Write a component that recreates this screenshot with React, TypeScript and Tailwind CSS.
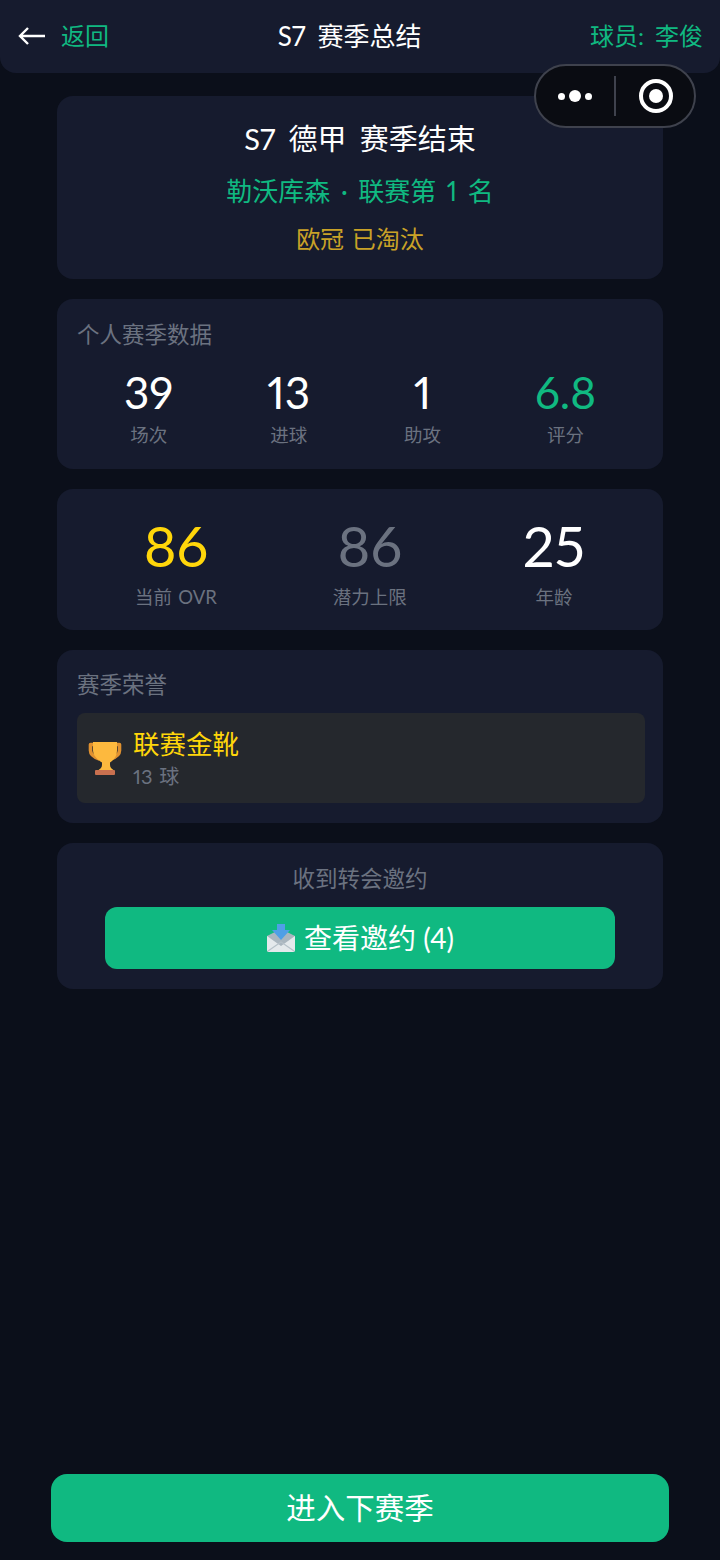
const stats = [
  { value: '39', label: '场次', color: 'text-white' },
  { value: '13', label: '进球', color: 'text-white' },
  { value: '1', label: '助攻', color: 'text-white' },
  { value: '6.8', label: '评分', color: 'text-[#10b981]' },
];

const overview = [
  { value: '86', label: '当前 OVR', color: 'text-[#ffd60a]' },
  { value: '86', label: '潜力上限', color: 'text-[#6b7280]' },
  { value: '25', label: '年龄', color: 'text-white' },
];

function TrophyIcon() {
  return (
    <svg width="36" height="36" viewBox="0 0 36 36" fill="none">
      <path d="M8 4.500H3.500v6c0 4 3 6.500 9 8.500M28 4.500h4.500v6c0 4-3 6.500-9 8.500" stroke="#e0912f" strokeWidth="3.600" strokeLinejoin="round" />
      <path d="M6 2h24v8c0 6-3 10-7 12.500V25c0 2.500 2 4 4 5.500H11c2-1.500 4-3 4-5.500v-2.500C11 20 6 16 6 10V2z" fill="#fdb93e" />
      <rect x="8" y="30" width="20" height="5" rx="1" fill="#c9704f" />
    </svg>
  );
}

function InboxIcon() {
  return (
    <svg width="30" height="30" viewBox="0 0 30 30" fill="none">
      <path d="M1 13L15 6l14 7v14a2 2 0 0 1-2 2H3a2 2 0 0 1-2-2V13z" fill="#aab6bf" />
      <path d="M1 13l14 10 14-10v14a2 2 0 0 1-2 2H3a2 2 0 0 1-2-2V13z" fill="#e4e9ec" />
      <path d="M2 28l13-9 13 9" stroke="#b6c1c9" strokeWidth="1.200" />
      <path d="M11 1h8v6h5l-9 10-9-10h5V1z" fill="#4f9fe6" />
    </svg>
  );
}

function Card({ className, children }: { className: string; children: React.ReactNode }) {
  return <div className={`rounded-[16px] bg-[#161b2e] ${className}`}>{children}</div>;
}

export default function App() {
  return (
    <div
      className="relative flex h-[1560px] w-[720px] flex-col overflow-hidden bg-[#0b0f1a] text-white proportional-nums [word-spacing:0.1em]"
      style={{ fontFamily: 'Lato, "Noto Sans CJK SC", sans-serif' }}
    >
      {/* top bar */}
      <div className="flex h-[73px] items-center justify-between rounded-b-[16px] bg-[#161b2e] pb-[2px] pl-[18px] pr-[17px]">
        <div className="flex items-center gap-[15px]">
          <svg width="28" height="20" viewBox="0 0 28 20" fill="none">
            <path d="M27 10H2M10 2l-8 8 8 8" stroke="white" strokeWidth="2.400" />
          </svg>
          <span className="text-[24px] leading-none text-[#10b981]">返回</span>
        </div>
        <span className="text-[26px] leading-none [word-spacing:0.2em]">S7 赛季总结</span>
        <span className="text-[24px] leading-none text-[#10b981] [word-spacing:0.2em]">球员: 李俊</span>
      </div>

      {/* wechat capsule */}
      <div className="absolute left-[534px] top-[64px] flex h-[64px] w-[162px] items-center rounded-full border-2 border-[#3f424d] bg-[#0a0c12]">
        <div className="flex w-[77px] items-center justify-center gap-[4px]">
          <span className="h-[7px] w-[7px] rounded-full bg-white" />
          <span className="h-[12px] w-[12px] rounded-full bg-white" />
          <span className="h-[7px] w-[7px] rounded-full bg-white" />
        </div>
        <div className="ml-[1px] h-[40px] w-[2px] bg-[#3f424d]" />
        <div className="flex flex-1 items-center justify-center pl-[2px]">
          <div className="flex h-[34px] w-[34px] items-center justify-center rounded-full border-[4px] border-white">
            <span className="h-[14px] w-[14px] rounded-full bg-white" />
          </div>
        </div>
      </div>

      <div className="mx-[57px] mt-[23px] flex flex-col gap-[20px]">
        <Card className="flex h-[183px] flex-col items-center pt-[23px]">
          <div className="text-[29px] leading-[40px] [word-spacing:0.2em]">S7 德甲 赛季结束</div>
          <div className="mt-[14px] text-[26px] leading-[36px] text-[#10b981] [word-spacing:0.15em]">勒沃库森 · 联赛第 1 名</div>
          <div className="mt-[13px] text-[24px] leading-[34px] text-[#c9a227]">欧冠 已淘汰</div>
        </Card>

        <Card className="h-[170px] px-[20px] pt-[20px]">
          <div className="text-[22.500px] leading-[32px] text-[#6b7280]">个人赛季数据</div>
          <div className="mt-[13px] flex justify-around">
            {stats.map((s) => (
              <div key={s.label} className="flex flex-col items-center">
                <span className={`text-[44px] leading-[56px] ${s.color}`}>{s.value}</span>
                <span className="mt-[2px] text-[18.500px] leading-[26px] text-[#6b7280]">{s.label}</span>
              </div>
            ))}
          </div>
        </Card>

        <Card className="h-[141px] px-[20px] pt-[22px]">
          <div className="flex justify-around">
            {overview.map((s) => (
              <div key={s.label} className="flex flex-col items-center">
                <span className={`text-[56px] leading-[70px] ${s.color}`}>{s.value}</span>
                <span className="mt-[2px] text-[18.500px] leading-[28px] text-[#6b7280]">{s.label}</span>
              </div>
            ))}
          </div>
        </Card>

        <Card className="h-[173px] pl-[20px] pr-[18px] pt-[19px]">
          <div className="text-[22.500px] leading-[32px] text-[#6b7280]">赛季荣誉</div>
          <div className="mt-[12px] flex h-[90px] items-center gap-[10px] rounded-[8px] bg-[#25282d] pl-[10px]">
            <TrophyIcon />
            <div className="flex flex-col">
              <span className="text-[26.500px] leading-[36px] text-[#ffd60a]">联赛金靴</span>
              <span className="text-[20px] leading-[28px] text-[#6b7280]">13 球</span>
            </div>
          </div>
        </Card>

        <Card className="flex h-[146px] flex-col items-center pt-[20px]">
          <div className="text-[22.500px] leading-[32px] text-[#6b7280]">收到转会邀约</div>
          <button className="mt-[12px] flex h-[62px] w-[510px] items-center justify-center gap-[8px] rounded-[12px] bg-[#10b981] text-[28px] leading-none text-white">
            <InboxIcon />
            <span>查看邀约 (4)</span>
          </button>
        </Card>
      </div>

      {/* bottom action */}
      <div className="mt-auto px-[51px] pb-[18px]">
        <button className="flex h-[68px] w-full items-center justify-center rounded-[16px] bg-[#10b981] text-[29.500px] leading-none text-white">
          进入下赛季
        </button>
      </div>
    </div>
  );
}
